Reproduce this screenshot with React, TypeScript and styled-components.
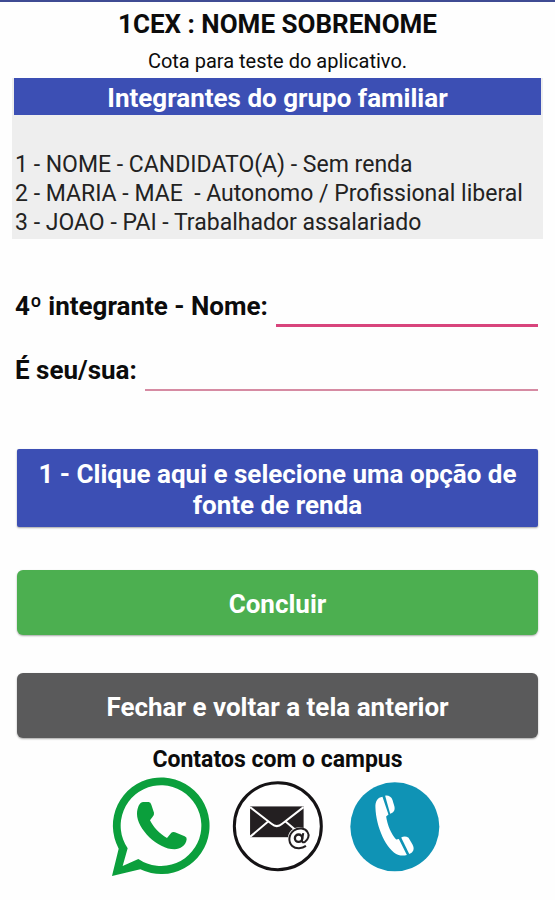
import React from "react";
import styled, { createGlobalStyle } from "styled-components";

const GlobalStyle = createGlobalStyle`
  *, *::before, *::after { box-sizing: border-box; }
  body {
    margin: 0;
    background: #fefefe;
    color: #0c0c0c;
    font-family: Roboto, "Liberation Sans", sans-serif;
  }
`;

const Screen = styled.main`
  display: flex;
  flex-direction: column;
  border-top: 2px solid #3f4b93;
  padding: 4px 12px 16px;
`;

const Title = styled.h1`
  margin: 0;
  padding-top: 1px;
  font-size: 26px;
  line-height: 34px;
  font-weight: 700;
  text-align: center;
`;

const Subtitle = styled.p`
  margin: 4px 0 1px;
  font-size: 20px;
  line-height: 32px;
  text-align: center;
`;

const Family = styled.section`
  background: #eeeeee;
`;

const FamilyHeading = styled.h2`
  margin: 0 2px;
  padding-top: 3px;
  background: #3c4fb4;
  color: #ffffff;
  font-size: 26px;
  line-height: 34px;
  font-weight: 700;
  text-align: center;
`;

const Members = styled.ul`
  list-style: none;
  margin: 0;
  padding: 35px 3px 2px;
  font-size: 23px;
  line-height: 29px;
  color: #222222;
`;

const Member = styled.li`
  white-space: pre-wrap;
`;

const Form = styled.form`
  display: flex;
  flex-direction: column;
  padding: 48px 5px 0;
`;

const Fields = styled.div`
  display: flex;
  flex-direction: column;
  gap: 24px;
  margin-left: -2px;
`;

const Field = styled.div`
  display: flex;
  align-items: flex-start;
  gap: 8px;
`;

const Label = styled.label`
  font-size: 26px;
  line-height: 38px;
  font-weight: 700;
  white-space: nowrap;
`;

const Input = styled.input<{ $active?: boolean }>`
  flex: 1;
  min-width: 0;
  height: 40px;
  padding: 0 4px;
  border: 0;
  border-bottom: ${(p) => (p.$active ? "3px solid #d8447c" : "2px solid #d68ba3")};
  background: transparent;
  font: inherit;
  font-size: 24px;
  outline: none;
`;

const tones = { blue: "#3c4fb4", green: "#4caf50", gray: "#5a5a5b" };

const Button = styled.button<{ $tone: keyof typeof tones }>`
  width: 100%;
  min-height: 65px;
  padding: 10px 16px 6px;
  border: 0;
  border-radius: ${(p) => (p.$tone === "blue" ? "2px" : "6px")};
  background: ${(p) => tones[p.$tone]};
  box-shadow: 0 1px 2px rgba(0, 0, 0, 0.35);
  color: #ffffff;
  font-family: inherit;
  font-size: 26px;
  line-height: 31px;
  font-weight: 700;
  cursor: pointer;
`;

const Actions = styled.div`
  display: flex;
  flex-direction: column;
  gap: 38px;
  margin-top: 43px;
`;

const IncomeAction = styled.div`
  margin-top: 58px;
`;

const Contacts = styled.footer`
  padding-top: 6px;
`;

const ContactsTitle = styled.h2`
  margin: 0;
  font-size: 23px;
  line-height: 32px;
  font-weight: 700;
  text-align: center;
`;

const ContactLinks = styled.nav`
  display: grid;
  grid-template-columns: repeat(3, 117px);
  justify-content: center;
  align-items: center;
  justify-items: center;
`;

const ContactLink = styled.a`
  display: flex;
  color: inherit;
`;

const WhatsAppIcon = () => (
  <svg width="102" height="101" viewBox="30 108 306 303" aria-hidden="true">
    <path
      fill="#0b9f3c"
      fillRule="evenodd"
      d="M36 408 L56 326 A145 145 0 1 1 121 388 Z M68 378 L115 357 A121 121 0 1 0 83 325 Z"
    />
    <path
      fill="#0b9f3c"
      d="M111 222 C111 205 118 186 130 186 L146 186 Q152 187 154 194 L162 218 Q163 224 158 230 L150 241 C160 262 178 281 201 294 L214 278 Q219 274 225 277 L254 289 Q261 292 260 298 C258 317 240 328 224 328 C172 328 111 266 111 222 Z"
    />
  </svg>
);

const MailIcon = () => (
  <svg width="92" height="92" viewBox="36 34 275 275" aria-hidden="true">
    <circle cx="173" cy="169" r="130" fill="#ffffff" stroke="#151315" strokeWidth="9" />
    <rect x="90" y="110" width="160" height="92" fill="#231f21" />
    <path
      d="M90 112 L154 162 Q170 176 186 162 L250 112 M90 201 L144 155 M250 201 L196 155"
      fill="none"
      stroke="#ffffff"
      strokeWidth="6"
    />
    <circle cx="237" cy="206" r="34" fill="#ffffff" />
    <circle cx="235" cy="205" r="11" fill="none" stroke="#231f21" strokeWidth="7" />
    <path
      d="M249 190 L245 212 Q246 220 254 216 C264 209 268 196 262 187 C255 174 234 172 221 182 C205 194 203 216 216 228 C227 238 246 236 257 228"
      fill="none"
      stroke="#231f21"
      strokeWidth="6"
    />
  </svg>
);

const PhoneIcon = () => (
  <svg width="90" height="90" viewBox="31 34 269 269" aria-hidden="true">
    <circle cx="165" cy="168" r="133" fill="#0f93b5" />
    <g fill="#ffffff">
      <path d="M128 78 C114 80 106 91 107 110 C109 168 139 238 176 252 Q188 256 201 252 L177 204 L169 206 C154 188 143 164 139 137 L146 131 Z" />
      <path d="M136 75 C145 73 155 78 158 88 L164 108 C166 119 161 126 151 129 Z" />
      <path d="M184 200 C191 196 199 196 206 201 L217 219 C225 233 221 244 208 249 Z" />
    </g>
  </svg>
);

const members = [
  "1 - NOME - CANDIDATO(A) - Sem renda",
  "2 - MARIA - MAE  - Autonomo / Profissional liberal",
  "3 - JOAO - PAI - Trabalhador assalariado",
];

export default function App() {
  return (
    <>
      <GlobalStyle />
      <Screen>
        <Title>1CEX : NOME SOBRENOME</Title>
        <Subtitle>Cota para teste do aplicativo.</Subtitle>
        <Family>
          <FamilyHeading>Integrantes do grupo familiar</FamilyHeading>
          <Members>
            {members.map((member) => (
              <Member key={member}>{member}</Member>
            ))}
          </Members>
        </Family>
        <Form onSubmit={(event) => event.preventDefault()}>
          <Fields>
            <Field>
              <Label htmlFor="nome">4º integrante - Nome:</Label>
              <Input id="nome" type="text" $active />
            </Field>
            <Field>
              <Label htmlFor="parentesco">É seu/sua:</Label>
              <Input id="parentesco" type="text" />
            </Field>
          </Fields>
          <IncomeAction>
            <Button type="button" $tone="blue">
              1 - Clique aqui e selecione uma opção de fonte de renda
            </Button>
          </IncomeAction>
          <Actions>
            <Button type="submit" $tone="green">Concluir</Button>
            <Button type="button" $tone="gray">Fechar e voltar a tela anterior</Button>
          </Actions>
        </Form>
        <Contacts>
          <ContactsTitle>Contatos com o campus</ContactsTitle>
          <ContactLinks>
            <ContactLink href="#whatsapp" aria-label="WhatsApp"><WhatsAppIcon /></ContactLink>
            <ContactLink href="#email" aria-label="E-mail"><MailIcon /></ContactLink>
            <ContactLink href="#telefone" aria-label="Telefone"><PhoneIcon /></ContactLink>
          </ContactLinks>
        </Contacts>
      </Screen>
    </>
  );
}
